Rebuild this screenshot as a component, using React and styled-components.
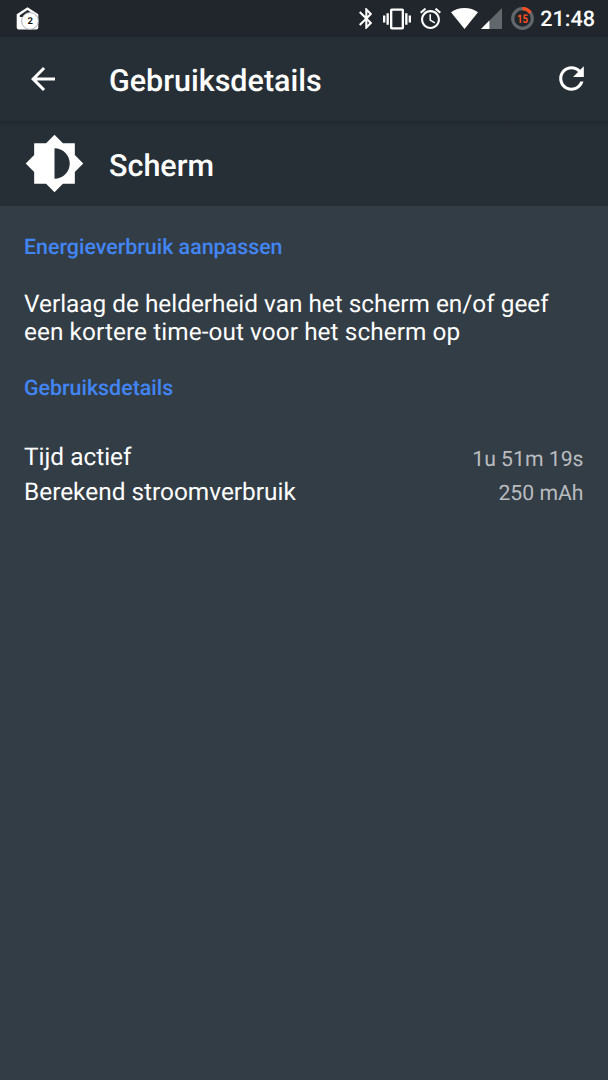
import React from "react";
import styled, { createGlobalStyle } from 'styled-components';

const GlobalStyle = createGlobalStyle`
  * {
    box-sizing: border-box;
  }
  body {
    margin: 0;
    background: #333d46;
    font-family: Roboto, "Liberation Sans", sans-serif;
    color: #fff;
    text-rendering: geometricPrecision;
  }
  h1, h2, h3, p, dl, dt, dd {
    margin: 0;
    font-weight: 400;
  }
`;

const Screen = styled.div`
  width: 608px;
  height: 1080px;
  display: flex;
  flex-direction: column;
  background: #333d46;
  overflow: hidden;
`;

const StatusBar = styled.div`
  height: 37px;
  flex: none;
  display: flex;
  align-items: center;
  justify-content: space-between;
  padding: 0 13px 0 16px;
  background: #20262c;
`;

const StatusGroup = styled.div`
  display: flex;
  align-items: center;
`;

const Icon = styled.svg`
  display: block;
  flex: none;
  width: ${p => p.$w}px;
  height: ${p => p.$h || p.$w}px;
  margin-left: ${p => p.$gap || 0}px;
  fill: #fff;
`;

const Clock = styled.span`
  margin-left: 6px;
  font-size: 21.6px;
  line-height: 37px;
  font-weight: 500;
  padding-top: 2px;
`;

const Toolbar = styled.header`
  height: 84px;
  flex: none;
  display: flex;
  align-items: center;
  padding: 0 18px 0 25px;
  background: #272f36;
`;

const IconButton = styled.button`
  padding: 0;
  border: 0;
  background: none;
  margin-bottom: 1px;
`;

const Title = styled.h1`
  flex: 1;
  margin-left: 48px;
  padding-top: 5px;
  font-size: 30.5px;
  line-height: 36px;
  font-weight: 500;
`;

const AppHeader = styled.section`
  height: 85px;
  flex: none;
  display: flex;
  align-items: center;
  padding-left: 24px;
  background: linear-gradient(#20262d, #272f36 5px);
`;

const AppName = styled.h2`
  margin-left: 24px;
  padding-top: 6px;
  font-size: 30.5px;
  line-height: 36px;
  font-weight: 500;
`;

const Content = styled.main`
  padding: 28px 24.5px 0 24px;
`;

const SectionTitle = styled.h3`
  font-size: 21.4px;
  line-height: 28px;
  font-weight: 500;
  color: #4285f4;
`;

const Advice = styled.p`
  padding: 28px 0 29px;
  font-size: 24.35px;
  line-height: 28px;
`;

const AdviceLine = styled.span`
  display: block;
  letter-spacing: ${p => p.$tracking || 0}px;
`;

const Stats = styled.dl`
  padding-top: 37px;
`;

const StatRow = styled.div`
  height: 34.5px;
  display: flex;
  align-items: center;
  justify-content: space-between;
`;

const Label = styled.dt`
  padding-bottom: 1px;
  font-size: 24.4px;
`;

const Value = styled.dd`
  padding-top: 3.5px;
  font-size: 21.2px;
  color: #b9bcbf;
`;

const BadgeText = styled.text`
  font-family: Roboto, sans-serif;
  font-size: ${p => p.$size}px;
  font-weight: 700;
  text-anchor: middle;
  fill: ${p => p.$color};
`;

const HomeBadge = () => (
  <Icon $w={23} viewBox="0 0 23 23">
    <path d="M11.5 0.3L22.3 7.3V20.5Q22.3 22.5 20.3 22.5H2.7Q0.7 22.5 0.7 20.5V7.3Z" />
    <path d="M3.8 8.2L11.5 3L14.5 5L6.8 10.1H3.8Z" fill="#20262c" />
    <circle cx="14" cy="14" r="8.4" stroke="#a3a6a9" strokeWidth="0.9" />
    <BadgeText x="14.2" y="17.2" $size={9.5} $color="#111">2</BadgeText>
  </Icon>
);

const Bluetooth = () => (
  <Icon $w={13.3} $h={21} viewBox="5 2 12.71 20">
    <path d="M17.71 7.71L12 2h-1v7.59L6.41 5 5 6.41 10.59 12 5 17.59 6.41 19 11 14.41V22h1l5.71-5.71-4.3-4.29 4.3-4.29zM13 5.83l1.88 1.88L13 9.59V5.83zm1.88 10.46L13 18.17v-3.76l1.88 1.88z" />
  </Icon>
);

const Vibrate = () => (
  <Icon $w={28} $gap={10.7} viewBox="0 0 24 24">
    <path d="M0 15h2V9H0v6zm3 2h2V7H3v10zm19-8v6h2V9h-2zm-3 8h2V7h-2v10zM16.5 3h-9C6.67 3 6 3.67 6 4.5v15c0 .83.67 1.5 1.5 1.5h9c.83 0 1.5-.67 1.5-1.5v-15c0-.83-.67-1.5-1.5-1.5zM16 19H8V5h8v14z" />
  </Icon>
);

const Alarm = () => (
  <Icon $w={21} $gap={9} viewBox="2 2 20 20">
    <path d="M22 5.72l-4.6-3.86-1.29 1.53 4.6 3.86L22 5.72zM7.88 3.39L6.6 1.86 2 5.71l1.29 1.53 4.59-3.85zM12.5 8H11v6l4.75 2.85.75-1.23-4-2.37V8zM12 4c-4.97 0-9 4.03-9 9s4.02 9 9 9c4.97 0 9-4.03 9-9s-4.03-9-9-9zm0 16c-3.87 0-7-3.13-7-7s3.13-7 7-7 7 3.13 7 7-3.13 7-7 7z" />
  </Icon>
);

const Wifi = () => (
  <Icon $w={27} $h={21} $gap={10.4} viewBox="0 0 27 21">
    <path d="M13.5 21L0 4.2C3.8 1.5 8.4 0 13.5 0S23.2 1.5 27 4.2Z" />
  </Icon>
);

const Signal = () => (
  <Icon $w={21} $gap={3} viewBox="0 0 21 21">
    <path d="M0 21L21 0V21Z" fill="#62676b" />
    <path d="M0 21L8.4 12.6V21Z" />
  </Icon>
);

const Battery = ({ level }) => {
  const length = 2 * Math.PI * 9.8;
  return (
    <Icon $w={23} $gap={9} viewBox="0 0 23 23">
      <g fill="none" strokeWidth="3.2" transform="rotate(-90 11.5 11.5)">
        <circle cx="11.5" cy="11.5" r="9.8" stroke="#62676b" />
        <circle cx="11.5" cy="11.5" r="9.8" stroke="#ff4f1e" strokeDasharray={`${length * level / 100} ${length}`} />
      </g>
      <BadgeText x="11.5" y="15.8" $size={12} $color="#ff4f1e" textLength="11" lengthAdjust="spacingAndGlyphs">{level}</BadgeText>
    </Icon>
  );
};

export default function App() {
  const stats = [
    { label: 'Tijd actief', value: '1u 51m 19s' },
    { label: 'Berekend stroomverbruik', value: '250 mAh' },
  ];

  return (
    <>
      <GlobalStyle />
      <Screen>
        <StatusBar>
          <HomeBadge />
          <StatusGroup>
            <Bluetooth />
            <Vibrate />
            <Alarm />
            <Wifi />
            <Signal />
            <Battery level={15} />
            <Clock>21:48</Clock>
          </StatusGroup>
        </StatusBar>
        <Toolbar>
          <IconButton aria-label="Terug">
            <Icon $w={36} viewBox="0 0 24 24">
              <path d="M20 11H7.83l5.59-5.59L12 4l-8 8 8 8 1.41-1.41L7.83 13H20v-2z" />
            </Icon>
          </IconButton>
          <Title>Gebruiksdetails</Title>
          <IconButton aria-label="Vernieuwen">
            <Icon $w={37} viewBox="0 0 24 24">
              <path d="M17.65 6.35C16.2 4.9 14.21 4 12 4c-4.42 0-7.99 3.58-7.99 8s3.57 8 7.99 8c3.73 0 6.84-2.55 7.73-6h-2.08c-.82 2.33-3.04 4-5.65 4-3.31 0-6-2.69-6-6s2.69-6 6-6c1.66 0 3.14.69 4.22 1.78L13 11h7V4l-2.35 2.35z" />
            </Icon>
          </IconButton>
        </Toolbar>
        <AppHeader>
          <Icon $w={61} viewBox="0 0 24 24">
            <path d="M20 15.31L23.31 12 20 8.69V4h-4.69L12 .69 8.69 4H4v4.69L.69 12 4 15.31V20h4.69L12 23.31 15.31 20H20v-4.69zM12 18V6c3.31 0 6 2.69 6 6s-2.69 6-6 6z" />
          </Icon>
          <AppName>Scherm</AppName>
        </AppHeader>
        <Content>
          <SectionTitle>Energieverbruik aanpassen</SectionTitle>
          <Advice>
            <AdviceLine>Verlaag de helderheid van het scherm en/of geef</AdviceLine>
            <AdviceLine $tracking={0.08}>een kortere time-out voor het scherm op</AdviceLine>
          </Advice>
          <SectionTitle>Gebruiksdetails</SectionTitle>
          <Stats>
            {stats.map(({ label, value }) => (
              <StatRow key={label}>
                <Label>{label}</Label>
                <Value>{value}</Value>
              </StatRow>
            ))}
          </Stats>
        </Content>
      </Screen>
    </>
  );
}
